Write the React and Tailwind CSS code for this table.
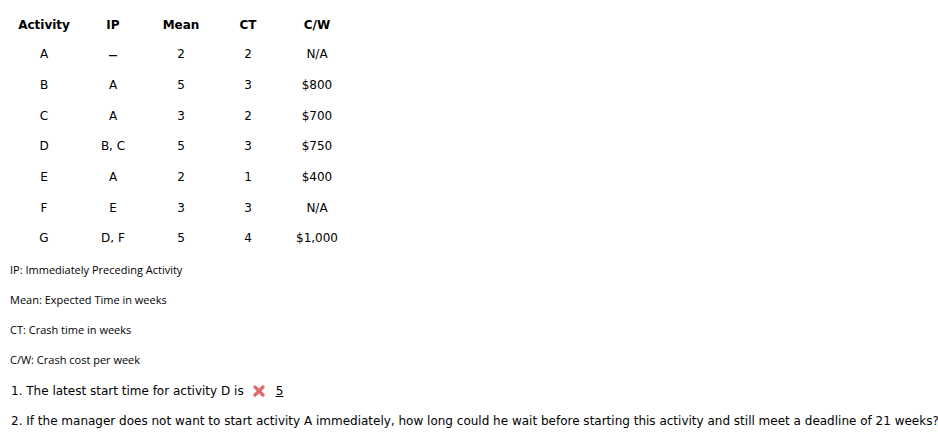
import React from 'react';

const rows = [
  ['A', '–', '2', '2', 'N/A'],
  ['B', 'A', '5', '3', '$800'],
  ['C', 'A', '3', '2', '$700'],
  ['D', 'B, C', '5', '3', '$750'],
  ['E', 'A', '2', '1', '$400'],
  ['F', 'E', '3', '3', 'N/A'],
  ['G', 'D, F', '5', '4', '$1,000'],
];

const colWidths = ['w-[68px]', 'w-[70px]', 'w-[66px]', 'w-[68px]', 'w-[70px]'];

const legend = [
  'IP: Immediately Preceding Activity',
  'Mean: Expected Time in weeks',
  'CT: Crash time in weeks',
  'C/W: Crash cost per week',
];

function Cross() {
  return (
    <svg width="12" height="12" viewBox="0 0 12 12" className="inline-block">
      <path d="M2 2 L10 10 M10 2 L2 10" stroke="#e06a6a" strokeWidth="3.2" strokeLinecap="round" />
    </svg>
  );
}

export default function App() {
  return (
    <div className="min-h-screen bg-white text-black overflow-hidden">
      <div className="pl-[10px] pt-[11px]">
        {/* data table */}
        <div className="font-['DejaVu_Sans',Verdana,sans-serif] text-[12px]">
          <div className="flex h-[28px] items-center font-bold">
            {['Activity', 'IP', 'Mean', 'CT', 'C/W'].map((h, i) => (
              <div key={h} className={`${colWidths[i]} text-center`}>{h}</div>
            ))}
          </div>
          {rows.map((r) => (
            <div key={r[0]} className="flex h-[30.67px] items-center">
              {r.map((c, i) => (
                <div key={i} className={`${colWidths[i]} text-center`}>
                  {c === '–' ? <span className="text-[9px] font-bold">—</span> : c}
                </div>
              ))}
            </div>
          ))}
        </div>

        {/* legend */}
        <div className="mt-[2px] font-['Open_Sans',sans-serif] text-[11px]">
          {legend.map((l) => (
            <div key={l} className="h-[30px] flex items-center">{l}</div>
          ))}
        </div>

        {/* questions */}
        <div className="font-['DejaVu_Sans',Verdana,sans-serif] text-[12px] whitespace-nowrap">
          <div className="h-[30px] flex items-center pl-[1px]">
            <span>1. The latest start time for activity D is</span>
            <span className="ml-[9px] mr-[11px] flex items-center"><Cross /></span>
            <span className="underline">5</span>
          </div>
          <div className="h-[30px] flex items-center pl-[1px]">
            2. If the manager does not want to start activity A immediately, how long could he wait before starting this activity and still meet a deadline of 21 weeks?
          </div>
        </div>
      </div>
    </div>
  );
}
